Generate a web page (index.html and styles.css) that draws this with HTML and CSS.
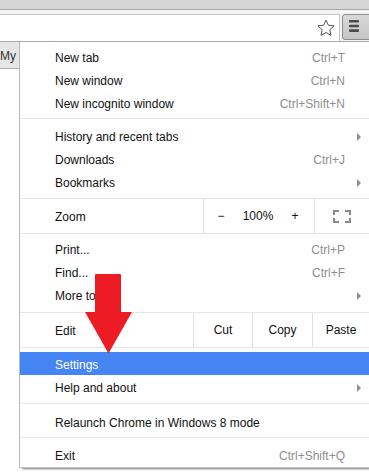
FILE: index.html
```html
<!DOCTYPE html>
<html lang="en">
<head>
  <meta charset="UTF-8" />
  <title>Chrome menu</title>
  <link rel="stylesheet" href="styles.css">
</head>
<body>

  <div class="tabstrip"></div>

  <div class="toolbar">
    <div class="omnibox">
      <svg class="star" width="18" height="18" viewBox="0 0 18 18">
        <polygon points="9,1 11.35,6.26 17.08,6.87 12.8,10.74 14,16.38 9,13.5 4,16.38 5.2,10.74 0.92,6.87 6.65,6.26" />
      </svg>
    </div>
    <div class="menu-btn">
      <svg width="10" height="12" viewBox="0 0 10 12">
        <rect x="0" y="0" width="10" height="2.6" rx="0.8" />
        <rect x="0" y="4.7" width="10" height="2.6" rx="0.8" />
        <rect x="0" y="9.3" width="10" height="2.6" rx="0.8" />
      </svg>
    </div>
  </div>

  <div class="content">
    <div class="bookmark-bar">
      <span class="bookmark">My</span>
    </div>

    <div class="menu">
      <div class="item"><span>New tab</span><span class="key">Ctrl+T</span></div>
      <div class="item"><span>New window</span><span class="key">Ctrl+N</span></div>
      <div class="item"><span>New incognito window</span><span class="key">Ctrl+Shift+N</span></div>
      <div class="sep"></div>
      <div class="item"><span>History and recent tabs</span><span class="sub"></span></div>
      <div class="item"><span>Downloads</span><span class="key">Ctrl+J</span></div>
      <div class="item"><span>Bookmarks</span><span class="sub"></span></div>

      <div class="wide-row zoom-row">
        <span class="wide-label">Zoom</span>
        <div class="zoom-ctrl">
          <span class="zoom-minus">&minus;</span>
          <span class="zoom-value">100%</span>
          <span class="zoom-plus">+</span>
        </div>
        <div class="fullscreen">
          <svg width="18" height="13" viewBox="0 0 18 13">
            <path d="M1,5 V1 H6 M12,1 H17 V5 M17,8 V12 H12 M6,12 H1 V8" />
          </svg>
        </div>
      </div>

      <div class="item"><span>Print...</span><span class="key">Ctrl+P</span></div>
      <div class="item"><span>Find...</span><span class="key">Ctrl+F</span></div>
      <div class="item"><span>More tools</span><span class="sub"></span></div>

      <div class="wide-row edit-row">
        <span class="wide-label">Edit</span>
        <span class="edit-cell cut">Cut</span>
        <span class="edit-cell copy">Copy</span>
        <span class="edit-cell paste">Paste</span>
      </div>

      <div class="item active"><span>Settings</span></div>
      <div class="item"><span>Help and about</span><span class="sub"></span></div>
      <div class="sep sep-loose"></div>
      <div class="item"><span>Relaunch Chrome in Windows 8 mode</span></div>
      <div class="sep"></div>
      <div class="item"><span>Exit</span><span class="key">Ctrl+Shift+Q</span></div>
    </div>
  </div>

  <svg class="pointer" width="369" height="476" viewBox="0 0 369 476">
    <path d="M96,274 Q95,274 95,275 L95,312 L85,312 L108.5,353.5 L132,312 L121,312 L121,275 Q121,274 120,274 Z" />
  </svg>

</body>
</html>
```

FILE: styles.css
```css
body {
  margin: 0;
  width: 369px;
  height: 476px;
  overflow: hidden;
  background-color: #fff;
  font-family: 'Liberation Sans', Arial, sans-serif;
  font-size: 12px;
  color: #111;
}

.tabstrip {
  height: 9px;
  background-color: #d5d5d5;
  border-bottom: 1px solid #a6a6a6;
}

.toolbar {
  display: flex;
  height: 31px;
  background-color: #f3f3f3;
  border-bottom: 1px solid #aaa;
}

.omnibox {
  flex: 1;
  margin-top: 4px;
  display: flex;
  align-items: center;
  justify-content: flex-end;
  background-color: #fff;
  border-top: 1px solid #c2c2c2;
  border-right: 1px solid #c2c2c2;
}

.star {
  margin-right: 4px;
  fill: none;
  stroke: #555;
  stroke-width: 1;
  stroke-linejoin: round;
}

.menu-btn {
  width: 30px;
  height: 26px;
  margin: 4px -3px 0 2px;
  box-sizing: border-box;
  border: 1px solid #8d8d8d;
  border-radius: 3px;
  background: linear-gradient(#d8d8d8, #c6c6c6);
}

.menu-btn svg {
  display: block;
  margin: 5px 0 0 6px;
  fill: #4b4b4b;
}

.content {
  display: flex;
}

.bookmark-bar {
  width: 19px;
  flex: none;
}

.bookmark {
  display: block;
  height: 27px;
  padding-top: 1px;
  box-sizing: border-box;
  line-height: 27px;
  overflow: hidden;
  white-space: nowrap;
  background-color: #e6e6e6;
  border-bottom: 1px solid #b0b0b0;
  color: #333;
}

.menu {
  flex: 1;
  padding: 3px 0 1px;
  background-color: #fff;
  border-left: 1px solid #b9b9b9;
  border-bottom: 1px solid #c4c4c4;
  box-shadow: 2px 2px 2px -1px rgba(0, 0, 0, 0.55);
}

.item {
  display: flex;
  justify-content: space-between;
  align-items: center;
  height: 23px;
  box-sizing: border-box;
  padding: 2px 24px 0 35px;
  white-space: nowrap;
}

.item.active {
  background-color: #4585f3;
  color: #fff;
}

.key {
  color: #8e8e8e;
}

.sub {
  width: 0;
  height: 0;
  margin-right: -16px;
  border-left: 4px solid #8e8e8e;
  border-top: 4px solid transparent;
  border-bottom: 4px solid transparent;
}

.sep {
  height: 1px;
  margin: 4px 0 5px;
  background-color: #e8e8e8;
}

.sep-loose {
  margin: 5px 0 6px;
}

.wide-row {
  display: flex;
  height: 36px;
  box-sizing: border-box;
  border-top: 1px solid #e6e6e6;
  border-bottom: 1px solid #e6e6e6;
}

.zoom-row {
  margin: 5px 0 3px;
}

.edit-row {
  margin: 6px 0 4px;
}

.wide-label {
  flex: 1;
  display: flex;
  align-items: center;
  padding: 2px 0 0 35px;
}

.zoom-ctrl {
  width: 111px;
  flex: none;
  display: flex;
  align-items: center;
  box-sizing: border-box;
  border-left: 1px solid #e0e0e0;
}

.zoom-minus,
.zoom-plus {
  width: 34px;
  text-align: center;
}

.zoom-value {
  width: 40px;
  text-align: center;
}

.fullscreen {
  width: 55px;
  flex: none;
  display: flex;
  align-items: center;
  justify-content: center;
  box-sizing: border-box;
  border-left: 1px solid #e0e0e0;
}

.fullscreen svg {
  fill: none;
  stroke: #8a8a8a;
  stroke-width: 2;
}

.edit-cell {
  flex: none;
  display: flex;
  align-items: center;
  justify-content: center;
  box-sizing: border-box;
  border-left: 1px solid #e0e0e0;
}

.cut {
  width: 59px;
}

.copy {
  width: 60px;
}

.paste {
  width: 57px;
}

.pointer {
  position: absolute;
  left: 0;
  top: 0;
  pointer-events: none;
  fill: #ed1c24;
}
```
